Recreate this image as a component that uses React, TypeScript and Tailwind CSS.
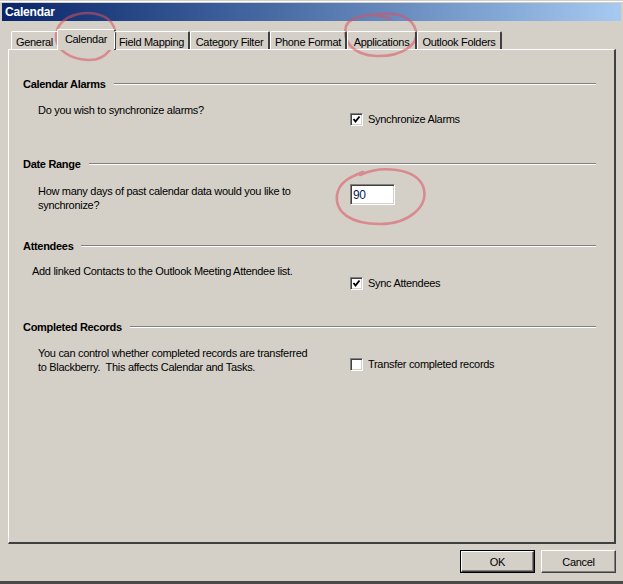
import React from "react";

const tabs = [
  { label: "General", w: "w-[48px]" },
  { label: "Calendar", w: "w-[59px]", active: true },
  { label: "Field Mapping", w: "w-[76px]" },
  { label: "Category Filter", w: "w-[80px]" },
  { label: "Phone Format", w: "w-[77px]" },
  { label: "Applications", w: "w-[70px]" },
  { label: "Outlook Folders", w: "w-[85px]" },
];

function SectionHeader({ title }: { title: string }) {
  return (
    <div className="flex items-center h-[14px]">
      <span className="font-bold whitespace-nowrap">{title}</span>
      <div className="flex-1 ml-[8px] h-[2px] border-t border-[#808080] border-b border-b-white" />
    </div>
  );
}

function Checkbox({ checked, label }: { checked: boolean; label: string }) {
  return (
    <div className="flex items-center gap-[5px]">
      <div className="relative w-[13px] h-[13px] bg-white border border-t-[#808080] border-l-[#808080] border-r-white border-b-white shadow-[inset_1px_1px_0_#404040,inset_-1px_-1px_0_#d4d0c8]">
        {checked && (
          <svg className="absolute left-0 top-0" width="11" height="11" viewBox="0 0 11 11">
            <path d="M2.5 5 L4.5 7.5 L8.5 2.5" fill="none" stroke="#000" strokeWidth="1.9" />
          </svg>
        )}
      </div>
      <span className="whitespace-nowrap">{label}</span>
    </div>
  );
}

export default function App() {
  return (
    <div className="relative w-[623px] h-[584px] bg-[#d4d0c8] overflow-hidden text-[11px] leading-[14px] tracking-[-0.3px] text-black border-b-[3px] border-[#4a4a4a] font-['Liberation_Sans',Arial,sans-serif]">
      <div className="h-[3px] bg-white border-t border-b border-[#d4d0c8]" />

      {/* title bar */}
      <div className="mx-[2px] h-[18px] flex items-center pl-[3px] bg-gradient-to-r from-[#0a246a] to-[#a6caf0] text-white font-bold text-[12px] tracking-[-0.2px]">
        Calendar
      </div>

      {/* tabs */}
      <div className="relative z-10 mt-[8px] h-[21px] flex items-end pl-[11px]">
        {tabs.map((t) =>
          t.active ? (
            <div
              key={t.label}
              className={`${t.w} -mx-[2px] h-[21px] bg-[#d4d0c8] border-l border-t border-white border-r-2 border-r-[#404040] rounded-t-[2px] flex justify-center pt-[2px] whitespace-nowrap`}
            >
              {t.label}
            </div>
          ) : (
            <div
              key={t.label}
              className={`${t.w} h-[18px] mb-[1px] border-l border-t border-white border-r-2 border-r-[#404040] rounded-t-[2px] flex justify-center pt-[3px] whitespace-nowrap`}
            >
              {t.label}
            </div>
          )
        )}
      </div>

      {/* tab page */}
      <div className="-mt-[1px] mx-[8px] w-[608px] h-[495px] border-l border-t border-white border-r-2 border-b-2 border-r-[#404040] border-b-[#404040] pl-[14px] pr-[18px] pt-[27px]">
        <div className="h-[80px]">
          <SectionHeader title="Calendar Alarms" />
          <div className="flex mt-[12px]">
            <div className="w-[327px] pl-[15px]">Do you wish to synchronize alarms?</div>
            <div className="pt-[9px]">
              <Checkbox checked label="Synchronize Alarms" />
            </div>
          </div>
        </div>

        <div className="h-[82px]">
          <SectionHeader title="Date Range" />
          <div className="flex mt-[13px]">
            <div className="w-[327px] pl-[15px]">
              <div className="w-[264px] overflow-hidden whitespace-nowrap">
                How many days of past calendar data would you like to
              </div>
              <div>synchronize?</div>
            </div>
            <div className="w-[45px] h-[21px] bg-white border border-t-[#808080] border-l-[#808080] border-r-white border-b-white shadow-[inset_1px_1px_0_#404040,inset_-1px_-1px_0_#d4d0c8] pl-[2px] pt-[3px] text-[12px] leading-[14px] text-[#0a1a5a]">
              90
            </div>
          </div>
        </div>

        <div className="h-[81px]">
          <SectionHeader title="Attendees" />
          <div className="flex mt-[11px]">
            <div className="w-[327px] pl-[9px]">Add linked Contacts to the Outlook Meeting Attendee list.</div>
            <div className="pt-[12px]">
              <Checkbox checked label="Sync Attendees" />
            </div>
          </div>
        </div>

        <div>
          <SectionHeader title="Completed Records" />
          <div className="flex mt-[12px]">
            <div className="w-[327px] pl-[15px]">
              <div>You can control whether completed records are transferred</div>
              <div>to Blackberry.&nbsp; This affects Calendar and Tasks.</div>
            </div>
            <div className="pt-[11px]">
              <Checkbox checked={false} label="Transfer completed records" />
            </div>
          </div>
        </div>
      </div>

      {/* buttons */}
      <div className="mt-[6px] flex justify-end gap-[6px] pr-[7px]">
        <div className="w-[75px] h-[23px] border border-black">
          <div className="w-full h-full flex items-center justify-center border-l border-t border-white border-r border-b border-r-[#404040] border-b-[#404040] shadow-[inset_-1px_-1px_0_#808080]">
            OK
          </div>
        </div>
        <div className="w-[75px] h-[23px] flex items-center justify-center border-l border-t border-white border-r border-b border-r-[#404040] border-b-[#404040] shadow-[inset_-1px_-1px_0_#808080]">
          Cancel
        </div>
      </div>

      {/* red hand-drawn annotations */}
      <svg className="absolute left-0 top-0 pointer-events-none" width="623" height="584" viewBox="0 0 623 584">
        <g fill="none" stroke="rgba(220,80,95,0.55)" strokeWidth="2.6" strokeLinecap="round">
          <path d="M70 17 C85 10 108 12 114 27 C119 44 106 61 88 60 C70 59 55 50 56 35 C57 25 63 19 74 15" />
          <path d="M390 19 C375 12 351 15 346 26 C342 41 353 55 376 56 C401 57 419 45 416 31 C413 18 399 12 380 14 C370 15 362 16 356 18" />
          <path d="M360 175 C381 165 415 168 423 186 C430 206 409 224 380 224 C350 224 335 212 337 195 C339 182 350 177 363 172" />
        </g>
      </svg>
    </div>
  );
}
